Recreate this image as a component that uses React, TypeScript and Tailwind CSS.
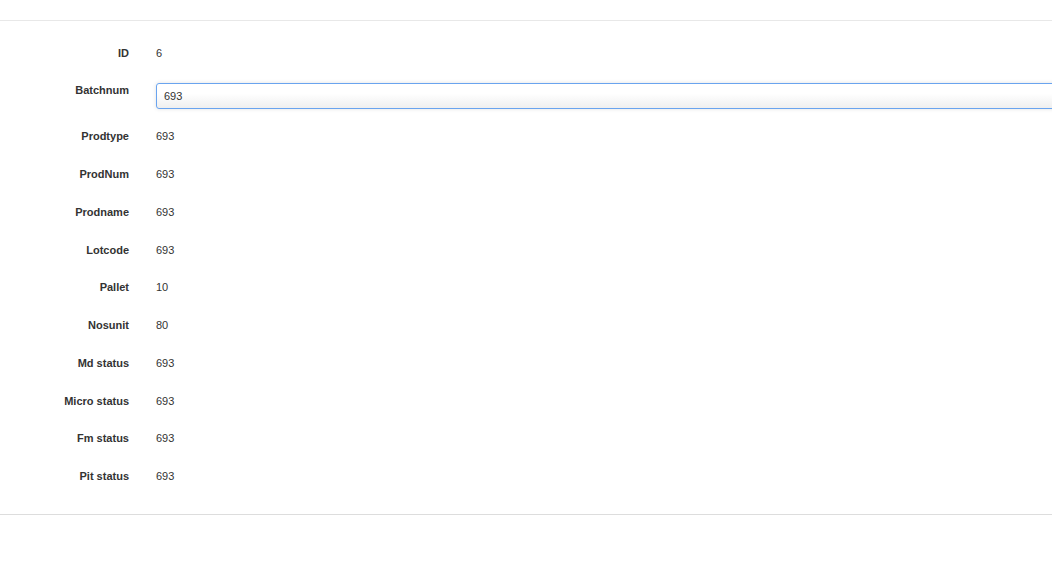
import { useState } from "react";

/** Fiche de lot en lecture seule, avec le champ Batchnum éditable. */
const rows = [
  { label: "Prodtype", value: "693" },
  { label: "ProdNum", value: "693" },
  { label: "Prodname", value: "693" },
  { label: "Lotcode", value: "693" },
  { label: "Pallet", value: "10" },
  { label: "Nosunit", value: "80" },
  { label: "Md status", value: "693" },
  { label: "Micro status", value: "693" },
  { label: "Fm status", value: "693" },
  { label: "Pit status", value: "693" },
];

function Label({ children }: { children: string }) {
  return <div className="w-[129px] shrink-0 text-right font-bold">{children}</div>;
}

export default function App() {
  const [batch, setBatch] = useState("693");

  return (
    <div className="h-[573px] w-[1052px] overflow-hidden bg-white font-['Liberation_Sans',Arial,sans-serif] text-[11px] leading-[17px] text-[#333]">
      <div className="h-5" />
      <div className="border-y border-t-[#e8e8e8] border-b-[#dddddd] pt-[14px] pb-[18px]">
        <div className="flex h-[37.78px] items-center">
          <Label>ID</Label>
          <div className="pl-[27px]">6</div>
        </div>

        <div className="flex h-[45.2px] items-start">
          <div className="pt-[9px]">
            <Label>Batchnum</Label>
          </div>
          <div className="pl-[27px] pt-[10px]">
            <input
              value={batch}
              onChange={(e) => setBatch(e.target.value)}
              className="h-[26px] w-[1000px] rounded-[3px] border border-[#6aa4ef] bg-gradient-to-b from-white from-40% to-[#efefef] px-[7px] text-[11px] text-[#333] shadow-[0_0_4px_rgba(0,0,0,0.12)] outline-none"
            />
          </div>
        </div>

        {rows.map((r) => (
          <div key={r.label} className="flex h-[37.78px] items-center">
            <Label>{r.label}</Label>
            <div className="pl-[27px]">{r.value}</div>
          </div>
        ))}
      </div>
    </div>
  );
}
